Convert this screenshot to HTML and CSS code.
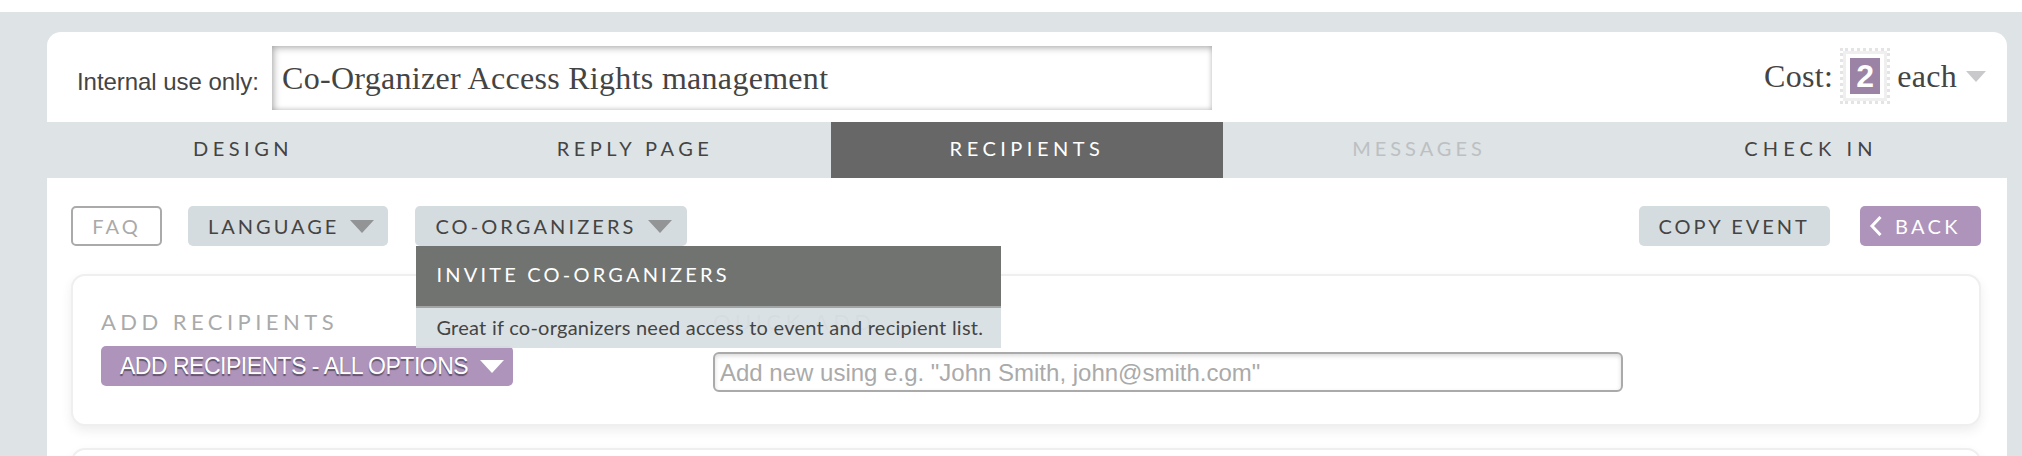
FILE: index.html
```html
<!DOCTYPE html>
<html lang="en">
<head>
<meta charset="utf-8">
<title>Co-Organizer Access Rights management</title>
<link rel="stylesheet" href="styles.css">
</head>
<body>
<main class="card">
  <header class="head">
    <label class="internal-label" for="internal">Internal use only:</label>
    <input class="internal-input" id="internal" value="Co-Organizer Access Rights management">
    <div class="cost">
      <span>Cost:</span>
      <span class="stamp"><span class="stamp-num">2</span></span>
      <span>each</span>
      <span class="tri tri-cost"></span>
    </div>
  </header>
  <nav class="tabs">
    <a class="tab">DESIGN</a>
    <a class="tab">REPLY PAGE</a>
    <a class="tab tab-active">RECIPIENTS</a>
    <a class="tab tab-off">MESSAGES</a>
    <a class="tab tab-wide">CHECK IN</a>
  </nav>
  <div class="tools">
    <a class="btn btn-faq">FAQ</a>
    <a class="btn btn-grey btn-drop btn-lang">LANGUAGE<span class="tri tri-grey"></span></a>
    <div class="menu-wrap">
      <a class="btn btn-grey btn-drop btn-coorg">CO-ORGANIZERS<span class="tri tri-grey"></span></a>
      <div class="menu">
        <div class="menu-title">INVITE CO-ORGANIZERS</div>
        <div class="menu-desc">Great if co-organizers need access to event and recipient list.</div>
      </div>
    </div>
    <div class="spacer"></div>
    <a class="btn btn-grey">COPY EVENT</a>
    <a class="btn btn-purple btn-back">
      <svg class="chev" width="13" height="20" viewBox="0 0 13 20"><path d="M11.5 1 3 10l8.5 9" fill="none" stroke="#fff" stroke-width="3"/></svg>BACK</a>
  </div>
  <section class="panel">
    <div class="col-add">
      <h2 class="label">ADD RECIPIENTS</h2>
      <a class="btn-all">ADD RECIPIENTS - ALL OPTIONS<span class="tri tri-white"></span></a>
    </div>
    <div class="col-quick">
      <h2 class="label">QUICK ADD</h2>
      <input class="quick-input" placeholder="Add new using e.g. &quot;John Smith, john@smith.com&quot;">
    </div>
  </section>
  <section class="panel panel-next"></section>
</main>
</body>
</html>
```
FILE: styles.css
```css
* { box-sizing: border-box; }
html, body { margin: 0; height: 456px; overflow: hidden; background: #fff; }
body { padding: 12px 15px 0 47px; background: linear-gradient(#fff 12px, #dee3e5 12px); font-family: Lato, sans-serif; color: #444; }
.card { margin-top: 20px; height: 424px; overflow: hidden; background: #fff; border-radius: 14px 14px 0 0; }
.head { height: 90px; display: flex; align-items: flex-start; padding: 14px 0 0 30px; }
.internal-label { font: 24px/1 "Liberation Sans", sans-serif; color: #444; margin-top: 24px; width: 195px; letter-spacing: -.05px; white-space: nowrap; }
.internal-input { width: 940px; height: 64px; border: 0; outline: 0; padding: 1px 10px 0; font: 32px "Liberation Serif", serif; letter-spacing: .3px; color: #444; background: #fff; box-shadow: inset 2px 2px 7px rgba(0,0,0,.3), inset -1px -1px 4px rgba(0,0,0,.1); }
.cost { margin-left: auto; display: flex; align-items: center; gap: 7px; height: 56px; margin-top: 2px; padding-right: 21px; font: 32px "Liberation Serif", serif; letter-spacing: .3px; color: #444; }
.stamp { width: 50px; height: 56px; display: flex; align-items: center; justify-content: center; background: #fff; border: 3px dotted #e4e4e4; outline: 3px solid #efefef; outline-offset: -6px; }
.stamp-num { width: 30px; height: 36px; background: #9a83a4; color: #fff; font: bold 32px/36px "Liberation Sans", sans-serif; letter-spacing: 0; text-align: center; }
.tri { display: inline-block; width: 0; height: 0; border-style: solid; border-color: transparent; border-width: 13px 12px 0; }
.tri-cost { border-top-color: #c9c9cc; border-width: 11px 10px 0; margin-left: 2px; }
.tri-grey { border-top-color: #929496; margin-left: 11px; }
.tri-white { border-top-color: #fff; margin-left: 12px; }
.tabs { display: grid; grid-template-columns: repeat(5, 1fr); height: 56px; background: #dee3e5; }
.tab { display: flex; align-items: center; justify-content: center; padding-bottom: 4px; font-size: 20px; letter-spacing: 4.5px; color: #444; }
.tab-active { background: #676767; color: #fff; }
.tab-off { color: #bcc0c2; letter-spacing: 4px; }
.tab-wide { letter-spacing: 5.1px; }
.tools { display: flex; align-items: flex-start; padding: 28px 26px 0 24px; height: 96px; }
.btn { display: inline-flex; align-items: center; height: 40px; padding: 0 20px; border-radius: 5px; font-size: 20px; letter-spacing: 3px; white-space: nowrap; }
.btn-faq { width: 91px; justify-content: center; padding: 0; border: 2px solid #aaa; color: #aaa; background: #fff; margin-right: 26px; }
.btn-grey { background: #d5dcdf; color: #444; }
.btn-drop { padding-right: 14px; }
.btn-lang { margin-right: 27px; }
.btn-coorg { padding-right: 15px; letter-spacing: 3.1px; }
.menu-wrap { position: relative; }
.menu { position: absolute; z-index: 2; left: 1px; top: 40px; width: 585px; background: rgba(216,223,226,.94); }
.menu-title { height: 62px; padding: 0 20px 4px; display: flex; align-items: center; background: #717371; border-bottom: 2px solid #a3a5a5; color: #fff; font-size: 20px; letter-spacing: 3.2px; }
.menu-desc { height: 40px; padding: 0 20px 2px; display: flex; align-items: center; font-size: 20px; letter-spacing: .25px; color: #444; white-space: nowrap; }
.spacer { flex: 1; }
.btn-purple { background: #ae93bb; color: #fff; margin-left: 30px; }
.btn-back { padding: 0 20px 0 9px; gap: 13px; letter-spacing: 3.4px; }
.panel { margin: 0 26px 0 24px; height: 152px; border: 2px solid #efefef; border-radius: 14px; background: #fff; box-shadow: 0 5px 12px rgba(0,0,0,.07); display: flex; padding: 33px 0 0 28px; }
.panel-next { margin-top: 22px; }
.col-add { width: 612px; }
.col-quick { width: 910px; }
.label { margin: 0 0 11px; font-size: 22px; line-height: 26px; font-weight: 400; letter-spacing: 4.45px; color: #aaa; white-space: nowrap; }
.col-quick .label { margin-bottom: 17px; color: #aaa; }
.btn-all { display: inline-flex; align-items: center; height: 40px; width: 412px; padding: 1px 19px 0; border-radius: 5px; background: #ae93bb; color: #fff; font: 23px "Liberation Sans", sans-serif; letter-spacing: -.5px; text-shadow: 0 2px 1px rgba(0,0,0,.45); white-space: nowrap; }
.quick-input { display: block; width: 910px; height: 40px; border: 2px solid #aaa; border-radius: 6px; outline: 0; padding: 1px 5px 0; font: 24px "Liberation Sans", sans-serif; background: #fff; box-shadow: inset 0 2px 4px rgba(0,0,0,.15); }
.quick-input::placeholder { color: #aaa; opacity: 1; }
```
